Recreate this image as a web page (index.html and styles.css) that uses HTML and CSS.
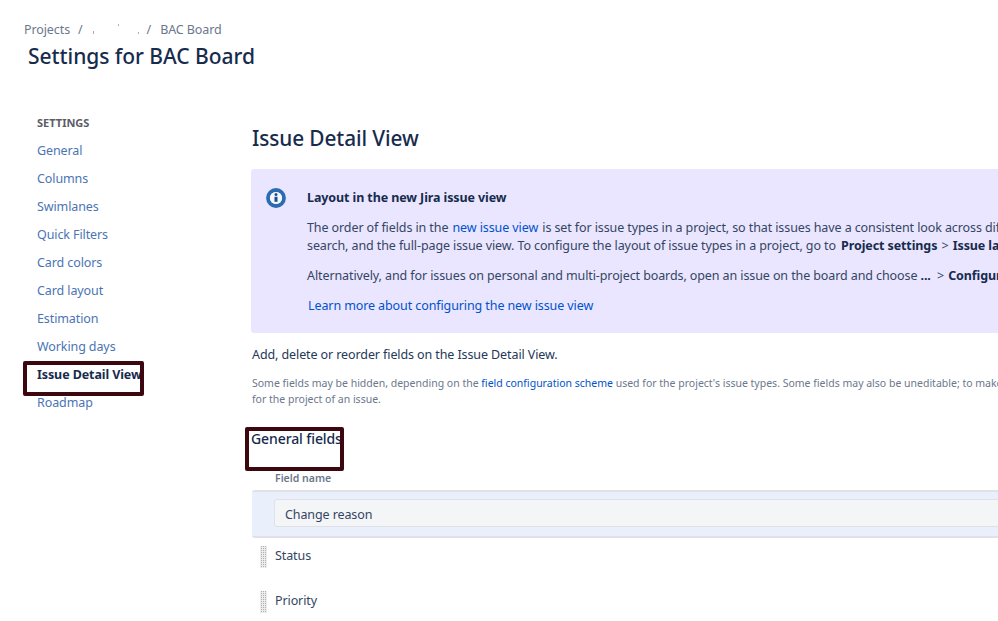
FILE: index.html
```html
<!DOCTYPE html>
<html lang="en">
<head>
<meta charset="utf-8">
<title>Settings for BAC Board</title>
<link rel="stylesheet" href="styles.css">
</head>
<body>
<header class="page-header">
  <nav class="crumbs"><span>Projects</span><span class="sep">/</span><span class="redacted"><i class="r1"></i><i class="r2"></i><i class="r3"></i></span><span class="sep">/</span><span>BAC Board</span></nav>
  <h1 class="title">Settings for BAC Board</h1>
</header>
<div class="layout">
  <aside class="side">
    <h2 class="side-head">SETTINGS</h2>
    <ul class="side-list">
      <li><a>General</a></li>
      <li><a>Columns</a></li>
      <li><a>Swimlanes</a></li>
      <li><a>Quick Filters</a></li>
      <li><a>Card colors</a></li>
      <li><a>Card layout</a></li>
      <li><a>Estimation</a></li>
      <li><a>Working days</a></li>
      <li class="active"><a>Issue Detail View</a><span class="mark mark-side"></span></li>
      <li><a>Roadmap</a></li>
    </ul>
  </aside>
  <main class="main">
    <h2 class="main-title">Issue Detail View</h2>
    <section class="notice">
      <svg class="notice-icon" width="20" height="20" viewBox="0 0 20 20" aria-hidden="true">
        <circle cx="10" cy="10" r="8" fill="none" stroke="#2b6cb0" stroke-width="3.8"/>
        <circle cx="10" cy="10" r="6.1" fill="#f4f6fc"/>
        <rect x="8.5" y="8.8" width="3" height="5" fill="#1a4f86"/>
        <circle cx="10" cy="6.6" r="1.5" fill="#1a4f86"/>
      </svg>
      <div class="notice-body">
        <h3 class="notice-title">Layout in the new Jira issue view</h3>
        <p class="notice-p">The order of fields in the <a class="link inline-link">new issue view</a> is set for issue types in a project, so that issues have a consistent look across different boards,<br>search, and the full-page issue view. To configure the layout of issue types in a project, go to <b class="lead-bold">Project settings</b> <span class="gt">&gt;</span> <b>Issue layout</b>.</p>
        <p class="notice-p">Alternatively, and for issues on personal and multi-project boards, open an issue on the board and choose <b class="dots">...</b> <span class="gt">&gt;</span> <b>Configure</b>.</p>
        <p class="notice-p learn"><a class="link">Learn more about configuring the new issue view</a></p>
      </div>
    </section>
    <p class="lead">Add, delete or reorder fields on the Issue Detail View.</p>
    <p class="small">Some fields may be hidden, depending on the <a class="link">field configuration scheme</a> used for the project's issue types. Some fields may also be uneditable; to make them editable, change the workflow<br>for the project of an issue.</p>
    <div class="general">
      <h3 class="general-title">General fields</h3>
      <span class="mark mark-general"></span>
    </div>
    <div class="col-head">Field name</div>
    <div class="add-row"><div class="add-input">Change reason</div></div>
    <div class="field-row"><span class="grip"></span><span class="field-name">Status</span></div>
    <div class="field-row"><span class="grip"></span><span class="field-name">Priority</span></div>
  </main>
</div>
</body>
</html>
```
FILE: styles.css
```css
* { box-sizing: border-box; }
html, body { margin: 0; height: 621px; overflow: hidden; background: #fff; }
body { font-family: "Noto Sans", "Open Sans", sans-serif; font-size: 12.5px; letter-spacing: -0.1px; color: #253858; width: 998px; }
h1, h2, h3, p, ul { margin: 0; padding: 0; }
ul { list-style: none; }

.page-header { padding: 21px 0 0 24px; height: 90px; }
.crumbs { display: flex; align-items: center; height: 18px; color: #6b778c; line-height: 18px; }
.sep { margin: 0 9px 0 8px; }
.redacted { position: relative; width: 47px; height: 14px; }
.redacted i { position: absolute; display: block; }
.r1 { left: 1px; top: 8px; width: 1px; height: 3px; background: #c9a0a0; }
.r2 { left: 26px; top: 1px; width: 1px; height: 2px; background: #b0b0b8; }
.r3 { left: 46px; top: 9px; width: 1px; height: 2px; background: #b0b0b8; }
.title { font-size: 21px; letter-spacing: -0.04px; font-weight: 500; line-height: 30px; color: #172b4d; margin: 2px 0 0 4px; }

.layout { display: flex; }
.side { width: 252px; padding: 25px 0 0 37px; flex: none; }
.side-head { font-size: 11px; letter-spacing: 0; font-weight: 700; line-height: 16px; margin-bottom: 6px; color: #5c5c66; }
.side-list li { position: relative; height: 28px; line-height: 28px; }
.side-list a { color: #4a74b4; }
.side-list .active a { color: #172b4d; font-weight: 700; }
.mark { position: absolute; border: 4px solid #3d0710; border-radius: 2px; background: transparent; }
.mark-side { left: -14px; top: 0; width: 121px; height: 35px; }

.main { flex: none; width: 900px; padding-top: 33px; }
.main-title { font-size: 20.8px; font-weight: 500; line-height: 30px; color: #172b4d; margin-bottom: 16px; }
.notice { display: flex; background: #eae6ff; border-radius: 3px; height: 164px; margin-left: -1px; padding: 19px 0 0 15px; }
.notice-icon { flex: none; margin-right: 21px; }
.notice-body { flex: none; width: 800px; }
.notice-title { font-size: 12.5px; font-weight: 700; line-height: 18px; color: #172b4d; margin-bottom: 12px; margin-top: 1px; }
.notice-p { line-height: 18px; margin-bottom: 12px; white-space: nowrap; color: #344563; }
.notice-p b { color: #172b4d; }
.inline-link { margin: 0 1px; }
.lead-bold { margin-left: 2px; }
.dots { margin-right: 2px; }
.gt { margin: 0 1px; }
.learn { padding-left: 1px; }
.link { color: #0052cc; }
.lead { line-height: 18px; margin-top: 13px; }
.small { font-size: 10.5px; letter-spacing: 0; line-height: 16px; color: #6b778c; margin-top: 11px; white-space: nowrap; }
.general { position: relative; margin-top: 22px; }
.general-title { font-size: 14px; font-weight: 500; line-height: 20px; color: #172b4d; margin-left: -1px; }
.mark-general { left: -7px; top: -2px; width: 99px; height: 44px; }
.col-head { font-size: 10.5px; letter-spacing: 0; font-weight: 600; color: #6b778c; line-height: 16px; padding-left: 23px; margin-top: 21px; }
.add-row { background: #e9f0fb; border-top: 2px solid #dfe1e6; border-bottom: 2px solid #dfe1e6; border-radius: 3px; height: 48px; margin-top: 4px; padding: 7px 0 0 22px; }
.add-input { background: #f4f5f7; border: 1px solid #dfe1e6; border-radius: 3px; height: 28px; line-height: 30px; padding-left: 10px; color: #344563; }
.field-row { display: flex; align-items: flex-start; height: 45px; line-height: 18px; padding: 8px 0 0 8px; color: #344563; }
.field-name { margin-top: 1px; }
.grip { width: 7px; height: 22px; margin-right: 8px; background: conic-gradient(#b0b0b0 25%, transparent 0) 0 0 / 2px 2px, #ececec; }
```
